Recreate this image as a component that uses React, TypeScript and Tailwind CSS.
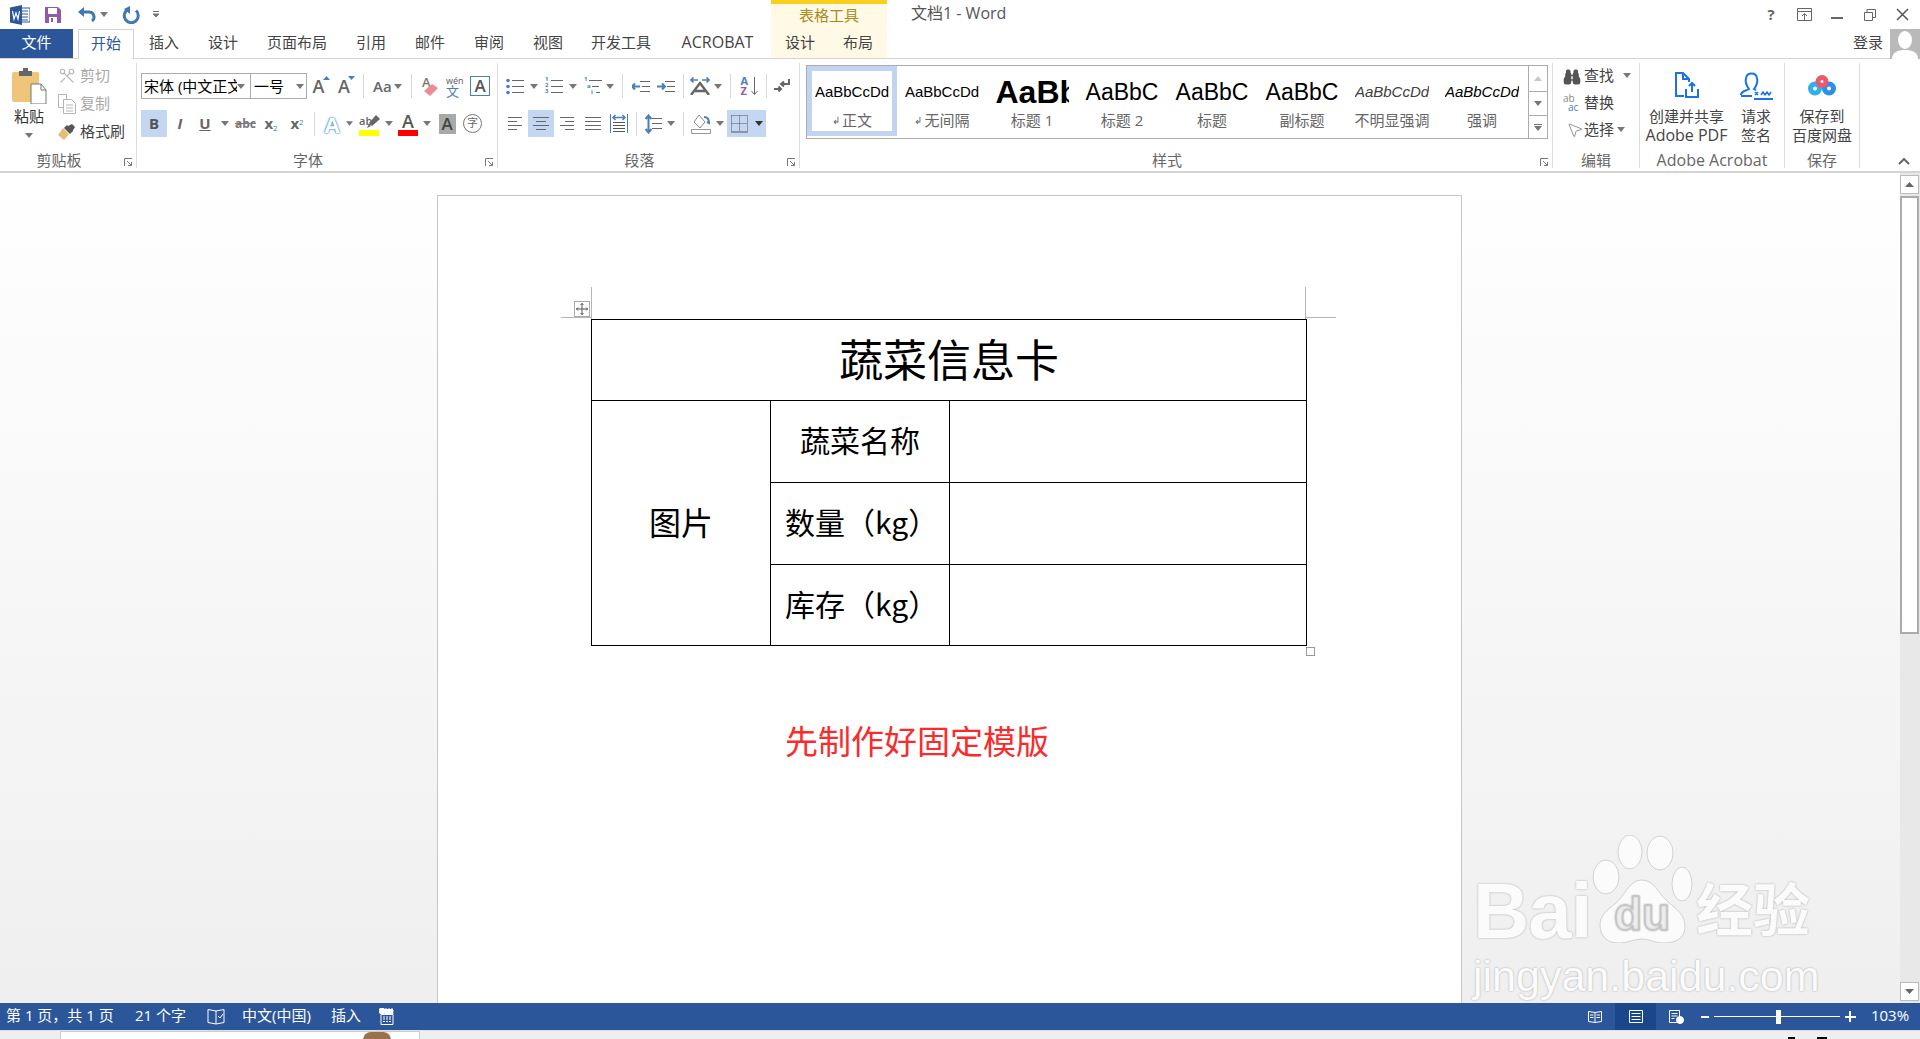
import { Binoculars, MousePointer2, Scissors } from 'lucide-react';

function Caret({ dark }: { dark?: boolean }) {
  return (
    <svg width="8" height="5" viewBox="0 0 8 5" className={dark ? 'fill-[#333]' : 'fill-[#777]'}>
      <path d="M0 0h8L4 5z" />
    </svg>
  );
}

function Sep() {
  return <div className="h-[24px] w-px bg-[#d8d8d8]" />;
}

function Launcher() {
  return (
    <svg width="9" height="9" viewBox="0 0 9 9" className="fill-none stroke-[#777]">
      <path d="M.5 8V.5H8" />
      <path d="M3 3l4 4M4 7.5h3.5V4" />
    </svg>
  );
}

// lines with per-row start and end, used by all paragraph icons
function Lines({ rows, w = 18, h = 16 }: { rows: [number, number, number][]; w?: number; h?: number }) {
  return (
    <svg width={w} height={h} viewBox={`0 0 ${w} ${h}`} className="stroke-[#666]">
      {rows.map(([y, a, b]) => (
        <path key={`${y}-${a}`} d={`M${a} ${y + 0.5}H${b}`} />
      ))}
    </svg>
  );
}

function Bullets() {
  return (
    <svg width="18" height="17" viewBox="0 0 18 17">
      <g className="fill-[#4a7ebb]">
        <circle cx="2" cy="2.5" r="1.8" />
        <circle cx="2" cy="8.5" r="1.8" />
        <circle cx="2" cy="14.5" r="1.8" />
      </g>
      <path d="M6 2.5h12M6 8.5h12M6 14.5h12" className="stroke-[#666]" />
    </svg>
  );
}

function Numbered() {
  return (
    <div className="relative h-[17px] w-[18px]">
      <svg width="18" height="17" viewBox="0 0 18 17">
        <path d="M6 2.5h12M6 8.5h12M6 14.5h12" className="stroke-[#666]" />
      </svg>
      <div className="absolute top-[-2px] left-0 flex flex-col text-[6px] leading-[6px] font-bold text-[#4a7ebb]">
        <span>1</span>
        <span>2</span>
        <span>3</span>
      </div>
    </div>
  );
}

function MultiLevel() {
  return (
    <div className="relative h-[17px] w-[18px]">
      <svg width="18" height="17" viewBox="0 0 18 17">
        <path d="M5 2.5h13M8 8.5h7M12 14.5h4" className="stroke-[#666]" />
      </svg>
      <div className="absolute top-[-2px] left-0 text-[6px] leading-[6px] font-bold text-[#4a7ebb]">1</div>
      <div className="absolute top-[5px] left-[3px] text-[6px] leading-[6px] font-bold text-[#4a7ebb]">a</div>
      <div className="absolute top-[11px] left-[7px] text-[6px] leading-[6px] font-bold text-[#4a7ebb]">i</div>
    </div>
  );
}

function Indent({ flip }: { flip?: boolean }) {
  return (
    <svg width="18" height="11" viewBox="0 0 18 11">
      <path d={flip ? 'M0 5.5h8M5 2.5l3 3-3 3' : 'M8 5.5H0M3 2.5l-3 3 3 3'} className="fill-none stroke-[#4a7ebb] stroke-2" />
      <path d="M8 .5h10M10 5.5h8M8 10.5h10" className="stroke-[#666]" />
    </svg>
  );
}

function TextDir() {
  return (
    <svg width="20" height="18" viewBox="0 0 20 18">
      <path d="M8 3H1M3.500 .5L1 3l2.500 2.500M12 3h7M16.500 .5L19 3l-2.500 2.500" className="fill-none stroke-[#4a7ebb] stroke-[1.6]" />
      <path d="M1 18L10 6l9 12M5 14h10" className="fill-none stroke-[#666] stroke-[2.5]" />
    </svg>
  );
}

function SortIcon() {
  return (
    <div className="flex h-[20px] w-[17px]">
      <div className="flex w-[10px] flex-col text-[11px] leading-[10px] font-bold">
        <span className="text-[#4a7ebb]">A</span>
        <span className="text-[#8f5aa8]">Z</span>
      </div>
      <svg width="7" height="20" viewBox="0 0 7 20" className="fill-none stroke-[#666]">
        <path d="M3.500 1v17M.5 15l3 3.500 3-3.500" />
      </svg>
    </div>
  );
}

function ParaMark() {
  return (
    <svg width="16" height="14" viewBox="0 0 16 14" className="fill-none">
      <path d="M15 0v5H8M10 2.500L7 5l3 2.500" className="stroke-[#666] stroke-2" />
      <path d="M0 10h7M4.500 7.500L7 10l-2.500 2.500" className="stroke-[#666] stroke-2" />
    </svg>
  );
}

function Distribute() {
  return (
    <svg width="18" height="20" viewBox="0 0 18 20" className="fill-none">
      <path d="M.5 0v19M17.500 0v19" className="stroke-[#4a7ebb]" />
      <path d="M3 3.500h12M5.500 1L3 3.500 5.500 6M12.500 1L15 3.500 12.500 6" className="stroke-[#4a7ebb] stroke-[1.500]" />
      <path d="M3 8.500h12M3 11.500h12M3 14.500h12M3 17.500h12" className="stroke-[#555]" />
    </svg>
  );
}

function LineSpace() {
  return (
    <svg width="17" height="20" viewBox="0 0 17 20" className="fill-none">
      <path d="M3.500 2v16M.5 5l3-3.500 3 3.500M.5 15l3 3.500 3-3.500" className="stroke-[#4a7ebb] stroke-2" />
      <path d="M7 4.500h10M7 9.500h10M7 14.500h10" className="stroke-[#666]" />
    </svg>
  );
}

function Shading() {
  return (
    <svg width="20" height="20" viewBox="0 0 20 20" className="fill-none">
      <path d="M8 1l6 7-5 6-6-6z" className="fill-white stroke-[#888]" />
      <path d="M13 3c3 0 5 2 5 6l-2-1" className="stroke-[#4a7ebb] stroke-2" />
      <path d="M.5 15.500h19v4H.5z" className="stroke-[#999]" />
    </svg>
  );
}

function Borders() {
  return (
    <svg width="17" height="18" viewBox="0 0 17 18" className="fill-none stroke-[#555]">
      <path d="M.5 .5h16M.5 .5v16M16.500 .5v16M8.500 .5v16M.5 8.500h16" strokeDasharray="1 1" />
      <path d="M0 17h17" />
    </svg>
  );
}

function WordLogo() {
  return (
    <svg width="20" height="20" viewBox="0 0 20 20">
      <path d="M11 3h9v14h-9z" className="fill-white stroke-[#2b579a]" />
      <path d="M12 6h6M12 9h6M12 12h6M12 15h6" className="stroke-[#2b579a]" />
      <path d="M0 2.500L12 0v20L0 17.500z" className="fill-[#2b579a]" />
      <path d="M2.500 6l1.500 8 2-6 2 6 1.500-8" className="fill-none stroke-white stroke-[1.200]" />
    </svg>
  );
}

function SaveIcon() {
  return (
    <svg width="16" height="16" viewBox="0 0 16 16">
      <path d="M0 0h13l3 3v13H0z" className="fill-[#8f5aa8]" />
      <path d="M3 1h9v6H3z" className="fill-white" />
      <path d="M4 10h8v6H4z" className="fill-white" />
      <path d="M6 11h2v4H6z" className="fill-[#8f5aa8]" />
    </svg>
  );
}

function UndoIcon() {
  return (
    <svg width="18" height="16" viewBox="0 0 18 16" className="fill-none">
      <path d="M2 5h9a5 5 0 0 1 3 9" className="stroke-[#3f78b5] stroke-[3]" />
      <path d="M6 0L0 5l6 5z" className="fill-[#3f78b5]" />
    </svg>
  );
}

function RedoIcon() {
  return (
    <svg width="18" height="18" viewBox="0 0 18 18" className="fill-none">
      <path d="M6 3.500a7 7 0 1 0 8 1" className="stroke-[#3f78b5] stroke-[3]" />
      <path d="M8 0v8L2 3z" className="fill-[#3f78b5]" />
    </svg>
  );
}

function PasteIcon() {
  return (
    <svg width="35" height="36" viewBox="0 0 35 36">
      <rect x="0" y="4" width="27" height="30" rx="2" className="fill-[#eec57a]" />
      <path d="M7 3h4V0h5v3h4v5H7z" className="fill-[#666]" />
      <path d="M19 16h10l5 6v14H19z" className="fill-white stroke-[#777]" />
      <path d="M29 16v6h5" className="fill-none stroke-[#777]" />
    </svg>
  );
}

function CopyIcon() {
  return (
    <svg width="18" height="20" viewBox="0 0 18 20" className="fill-white stroke-[#b5b5b5]">
      <path d="M.5 .5h8v13h-8z" />
      <path d="M5.500 5.500h8l4 4v10h-12z" />
      <path d="M8 11h7M8 14h7M8 17h7" />
    </svg>
  );
}

function BrushIcon() {
  return (
    <svg width="18" height="16" viewBox="0 0 18 16">
      <path d="M5 4l6 6-5 6L0 11z" className="fill-[#e5bd78]" />
      <path d="M10 2l4-2 3 3-3 5z" className="fill-[#555]" />
      <path d="M6 4l3-3 6 6-3 3z" className="fill-[#555]" />
    </svg>
  );
}

function GrowA({ up }: { up?: boolean }) {
  return (
    <div className="relative h-[22px] w-[14px] text-[18px] leading-[22px] font-semibold text-[#666]">
      A
      <svg width="7" height="4" viewBox="0 0 7 4" className="absolute top-[1px] right-[-3px] fill-[#4a7ebb]">
        <path d={up ? 'M0 4h7L3.500 0z' : 'M0 0h7L3.500 4z'} />
      </svg>
    </div>
  );
}

function Eraser() {
  return (
    <svg width="16" height="20" viewBox="0 0 16 20">
      <text x="0" y="11" className="fill-[#777] text-[13px] font-semibold">A</text>
      <path d="M2 15l8-7 6 4-8 8z" className="fill-[#ec8a96]" />
    </svg>
  );
}

function Highlighter() {
  return (
    <div className="relative flex h-[24px] w-[20px] flex-col items-start justify-end">
      <span className="text-[11px] leading-[15px] font-semibold text-[#666]">ab</span>
      <div className="mt-[2px] h-[6px] w-[20px] bg-[#ffff00]" />
      <svg width="13" height="14" viewBox="0 0 13 14" className="absolute top-[3px] right-[-1px] fill-[#666]">
        <path d="M9 0l4 4-8 7-3-3zM2 9l2 2-4 2z" />
      </svg>
    </div>
  );
}

function ExportIcon() {
  return (
    <svg width="24" height="26" viewBox="0 0 24 26" className="fill-none stroke-[#1a73e8] stroke-2">
      <path d="M9 24H1V1h7l6 6v3" />
      <path d="M8 1v6h6" />
      <path d="M11 17v8h12v-8" />
      <path d="M17 20v-9M14 14l3-3 3 3" />
    </svg>
  );
}

function SignIcon() {
  return (
    <svg width="33" height="28" viewBox="0 0 33 28" className="fill-none stroke-[#1a73e8]">
      <path d="M1 23c0-4 5-4 8-6-3-4-4-7-3-11 1-6 10-6 11 0 1 4 0 7-3 11l2 1" className="stroke-2" />
      <path d="M1 24h11" className="stroke-2" />
      <path d="M15 20l3 3M18 20l-3 3M21 23l2-3 2 3 2-3 2 3 2-3" className="stroke-[1.500]" />
      <path d="M14 27h19" className="stroke-2" />
    </svg>
  );
}

function BaiduDisk() {
  return (
    <svg width="28" height="21" viewBox="0 0 28 21" className="fill-none stroke-[5]">
      <circle cx="7" cy="13.500" r="4.500" className="stroke-[#2db0ec]" />
      <circle cx="21" cy="13.500" r="4.500" className="stroke-[#2b8fe6]" />
      <circle cx="14" cy="6.500" r="4" className="stroke-[#ec5a6a]" />
    </svg>
  );
}

function Style({ label, mark, selected, children }: { label: string; mark?: boolean; selected?: boolean; children: React.ReactNode }) {
  return (
    <div className={`flex h-[70px] w-[90px] flex-col items-center border-[5px] ${selected ? 'border-[#c1d5f1]' : 'border-transparent'}`}>
      <div className="flex h-[37px] w-[74px] items-center justify-center overflow-hidden pt-[7px] font-['Liberation_Sans',sans-serif] whitespace-nowrap text-black">
        {children}
      </div>
      <div className="mt-[3px] flex h-[22px] items-center text-[15px] leading-[22px] text-[#666] whitespace-nowrap">
        {mark && <span className="mr-[2px] text-[10px] leading-[10px]">↲</span>}
        {label}
      </div>
    </div>
  );
}

function Group({ label, className, labelClass, launcher, children }: { label: string; className: string; labelClass?: string; launcher?: boolean; children: React.ReactNode }) {
  return (
    <div className={`relative flex h-[105px] shrink-0 flex-col border-r border-[#dcdcdc] ${className}`}>
      <div className="min-h-0 flex-1">{children}</div>
      <div className={`h-[16px] text-center text-[15px] leading-[16px] text-[#666] whitespace-nowrap ${labelClass ?? ''}`}>{label}</div>
      {launcher && (
        <div className="absolute right-[3px] bottom-[1px] flex">
          <Launcher />
        </div>
      )}
    </div>
  );
}

function StatusBar() {
  return (
    <div className="flex h-[27px] shrink-0 items-center bg-[#2b579a] text-[15px] leading-[22px] whitespace-nowrap text-white">
      <span className="w-[135px] pb-[3px] pl-[6px]">第 1 页，共 1 页</span>
      <span className="w-[72px] pb-[3px]">21 个字</span>
      <span className="w-[35px]">
        <svg width="18" height="16" viewBox="0 0 18 16" className="fill-none stroke-white">
          <path d="M9 2L1 .5v13L9 15l8-1.500V.5L9 2zM9 2v13M11 7l2 2 3-4" />
        </svg>
      </span>
      <span className="w-[89px] pb-[3px]">中文(中国)</span>
      <span className="w-[48px] pb-[3px]">插入</span>
      <span>
        <svg width="15" height="17" viewBox="0 0 15 17" className="stroke-white">
          <circle cx="3" cy="3" r="3" className="fill-white" />
          <path d="M2 6.500h12v10H2z" className="fill-none" />
          <path d="M6 1h8v5H6zM4 9h8M4 11h8M4 13.500h8" className="fill-white" strokeDasharray="2 1" />
        </svg>
      </span>
      <div className="ml-auto flex h-full items-center">
        <div className="flex w-[40px] justify-center">
          <svg width="14" height="14" viewBox="0 0 14 14" className="fill-none stroke-white">
            <path d="M.5 1.500L7 2.500l6.500-1v10L7 12.500l-6.500-1zM7 2.500v10M2 5h3.500M2 7.500h3.500M8.500 5H12M8.500 7.500H12" />
          </svg>
        </div>
        <div className="flex h-full w-[41px] items-center justify-center bg-[#19478a]">
          <svg width="14" height="13" viewBox="0 0 14 13" className="fill-none stroke-white">
            <path d="M.5 .5h13v12H.5zM2.500 3.500h9M2.500 6.500h9M2.500 9.500h9" />
          </svg>
        </div>
        <div className="flex w-[40px] justify-center">
          <svg width="15" height="14" viewBox="0 0 15 14" className="fill-none stroke-white">
            <path d="M.5 .5h10v12H.5zM2.500 3.500h6M2.500 6h6M2.500 8.500h3" />
            <circle cx="11" cy="10" r="3.500" className="fill-white" />
          </svg>
        </div>
        <div className="flex w-[18px] justify-center">
          <div className="h-[2px] w-[8px] bg-white" />
        </div>
        <div className="flex w-[126px] items-center">
          <div className="h-px w-[62px] bg-white" />
          <div className="h-[14px] w-[5px] bg-white" />
          <div className="h-px flex-1 bg-white" />
        </div>
        <div className="relative flex h-[12px] w-[20px] items-center justify-center">
          <div className="h-[2px] w-[11px] bg-white" />
          <div className="absolute h-[11px] w-[2px] bg-white" />
        </div>
        <span className="w-[60px] pb-[3px] text-center text-[15px]">103%</span>
      </div>
    </div>
  );
}

function Watermark() {
  return (
    <div className="pointer-events-none absolute top-[662px] left-[1473px] flex w-[350px] flex-col font-['Liberation_Sans','Noto_Sans_CJK_SC',sans-serif] text-[#fbfbfb] [text-shadow:0_0_2px_#a0a0a0]">
      <div className="flex h-[108px] items-end">
        <span className="w-[119px] text-[78px] leading-[64px] font-bold tracking-[-1px] whitespace-nowrap">Bai</span>
        <svg width="102" height="108" viewBox="0 0 102 108" className="shrink-0 fill-[#fbfbfb] stroke-[#d2d2d2]">
          <ellipse cx="14" cy="42" rx="13" ry="17" />
          <ellipse cx="38" cy="17" rx="12" ry="17" />
          <ellipse cx="68" cy="18" rx="13" ry="17" />
          <ellipse cx="90" cy="49" rx="10" ry="17" />
          <path d="M50 45C62 45 66 58 75 66C85 74 93 80 93 92C93 104 82 108 72 108C62 108 58 104 50 104C42 104 36 108 26 108C14 108 8 100 8 90C8 78 18 74 26 66C34 58 38 45 50 45Z" />
          <text x="50" y="95" textAnchor="middle" className="fill-[#efefef] stroke-[#c4c4c4] text-[46px] font-bold">du</text>
        </svg>
        <span className="ml-[2px] text-[57px] leading-[64px] font-bold whitespace-nowrap">经验</span>
      </div>
      <div className="mt-[11px] text-[43px] leading-[44px] whitespace-nowrap">jingyan.baidu.com</div>
    </div>
  );
}

export default function App() {
  return (
    <div className="flex h-[1039px] w-[1920px] flex-col overflow-hidden bg-white font-['Open_Sans','Noto_Sans_CJK_SC',sans-serif] text-[#444]">
      {/* title row */}
      <div className="flex h-[29px] shrink-0 items-center">
        <div className="flex h-full w-[771px] shrink-0 items-center">
          <div className="ml-[10px] flex w-[35px]">
            <WordLogo />
          </div>
          <div className="flex w-[33px]">
            <SaveIcon />
          </div>
          <div className="flex w-[22px]">
            <UndoIcon />
          </div>
          <div className="flex w-[22px]">
            <Caret />
          </div>
          <div className="flex w-[31px]">
            <RedoIcon />
          </div>
          <svg width="6" height="7" viewBox="0 0 6 7" className="fill-none stroke-[#777]">
            <path d="M0 .5h6" />
            <path d="M0 3h6L3 6z" className="fill-[#777]" />
          </svg>
        </div>
        <div className="flex h-full w-[116px] shrink-0 items-center justify-center border-t-4 border-[#f8cf1d] bg-[#fff9e5] pb-[3px] text-[15px] text-[#a88a1d]">
          表格工具
        </div>
        <div className="ml-[24px] pb-[3px] text-[16px] text-[#555]">文档1 - Word</div>
        <div className="ml-auto mr-[5px] flex items-center text-[#666]">
          <span className="w-[26px] text-center text-[15px] font-bold">?</span>
          <div className="flex w-[40px] justify-center">
            <svg width="15" height="13" viewBox="0 0 15 13" className="fill-none stroke-[#666]">
              <path d="M.5 .5h14v12H.5zM.5 3.500h14M7.500 12V6M5 8l2.500-2.500L10 8" />
            </svg>
          </div>
          <div className="flex w-[26px] justify-center">
            <div className="mt-[6px] h-[2px] w-[12px] bg-[#666]" />
          </div>
          <div className="flex w-[40px] justify-center">
            <svg width="12" height="12" viewBox="0 0 12 12" className="fill-none stroke-[#666]">
              <path d="M.5 3.500h8v8h-8zM3 3.500V.5h8.500v8H8.500" />
            </svg>
          </div>
          <div className="flex w-[25px] justify-center">
            <svg width="13" height="13" viewBox="0 0 13 13" className="fill-none stroke-[#555] stroke-[1.500]">
              <path d="M1 1l11 11M12 1L1 12" />
            </svg>
          </div>
        </div>
      </div>

      {/* tabs */}
      <div className="flex h-[30px] shrink-0 border-b border-[#d4d4d4] text-center text-[15px] leading-[27px] whitespace-nowrap">
        <div className="w-[73px] bg-[#2b579a] text-white">文件</div>
        <div className="ml-[5px] -mb-px h-[30px] w-[56px] border-x border-t border-[#d4d4d4] bg-white text-[#2b579a]">开始</div>
        <div className="w-[60px]">插入</div>
        <div className="w-[58px]">设计</div>
        <div className="w-[90px]">页面布局</div>
        <div className="w-[58px]">引用</div>
        <div className="w-[60px]">邮件</div>
        <div className="w-[58px]">审阅</div>
        <div className="w-[60px]">视图</div>
        <div className="w-[86px]">开发工具</div>
        <div className="w-[107px] text-[16px]">ACROBAT</div>
        <div className="flex w-[116px] bg-[#fff9e5]">
          <div className="w-[58px]">设计</div>
          <div className="w-[58px]">布局</div>
        </div>
        <div className="ml-auto flex">
          <span className="mr-[7px]">登录</span>
          <div className="-mb-px flex h-[30px] w-[30px] items-start justify-center overflow-hidden bg-[#b9b9b9]">
            <svg width="30" height="30" viewBox="0 0 30 30" className="fill-white">
              <ellipse cx="15" cy="11" rx="7" ry="9" />
              <path d="M2 30c0-7 6-9 13-9s13 2 13 9z" />
            </svg>
          </div>
        </div>
      </div>

      {/* ribbon */}
      <div className="relative flex h-[114px] shrink-0 border-b-2 border-[#d4d4d4] pt-[4px] text-[15px] whitespace-nowrap">
        <Group label="剪贴板" className="w-[137px]" labelClass="pr-[18px]" launcher>
          <div className="flex">
            <div className="flex w-[58px] flex-col items-center pt-[5px]">
              <PasteIcon />
              <span className="mt-[1px] text-[15px] leading-[22px] text-[#333]">粘贴</span>
              <div className="mt-[6px] flex">
                <Caret />
              </div>
            </div>
            <div className="-mt-[2px] flex flex-col">
              <div className="flex h-[28px] items-center text-[#a8a8a8]">
                <div className="flex w-[22px] justify-start pt-[2px]">
                  <Scissors className="h-[18px] w-[18px] rotate-90 text-[#b5b5b5]" strokeWidth={1.5} />
                </div>
                剪切
              </div>
              <div className="flex h-[28px] items-center text-[#a8a8a8]">
                <div className="flex w-[22px] justify-start pt-[2px]">
                  <CopyIcon />
                </div>
                复制
              </div>
              <div className="flex h-[28px] items-center text-[#444]">
                <div className="flex w-[22px] justify-start pt-[2px]">
                  <BrushIcon />
                </div>
                格式刷
              </div>
            </div>
          </div>
        </Group>

        <Group label="字体" className="w-[361px] pl-[4px]" labelClass="pr-[22px]" launcher>
          <div className="mt-[10px] flex h-[26px] items-center">
            <div className="flex h-[26px] w-[110px] items-center border border-[#ababab] pl-[2px] leading-[22px] text-black">
              <span className="w-[93px] overflow-hidden whitespace-nowrap">宋体 (中文正文</span>
              <Caret />
            </div>
            <div className="flex h-[26px] w-[56px] items-center border border-l-0 border-[#ababab] pl-[3px] leading-[22px] text-black">
              <span className="w-[42px]">一号</span>
              <Caret />
            </div>
            <div className="flex w-[25px] justify-center">
              <GrowA up />
            </div>
            <div className="flex w-[26px] justify-center">
              <GrowA />
            </div>
            <div className="flex w-[10px] justify-center">
              <Sep />
            </div>
            <span className="ml-[5px] w-[21px] text-[15px] leading-[20px] font-semibold text-[#666]">Aa</span>
            <Caret />
            <div className="flex w-[18px] justify-center">
              <Sep />
            </div>
            <div className="flex w-[24px] justify-start pl-[2px]">
              <Eraser />
            </div>
            <div className="flex w-[26px] flex-col items-start pl-[2px] text-[9px] leading-[9px] text-[#555]">
              wén
              <span className="text-[13px] leading-[12px] text-[#4a7ebb]">文</span>
            </div>
            <div className="flex h-[20px] w-[20px] items-center justify-center border border-[#4a7ebb] text-[17px] leading-[18px] font-semibold text-[#555]">A</div>
          </div>
          <div className="mt-[11px] flex h-[27px] items-center">
            <div className="flex h-[27px] w-[26px] items-center justify-center bg-[#c3d6f2] text-[15px] font-bold text-[#555]">B</div>
            <div className="w-[26px] text-center text-[15px] font-bold text-[#666] italic">I</div>
            <div className="w-[24px] text-center text-[15px] font-bold text-[#666] underline">U</div>
            <div className="flex w-[16px] justify-center">
              <Caret />
            </div>
            <div className="w-[25px] text-center text-[12px] font-bold text-[#777] line-through">abc</div>
            <div className="w-[26px] text-center text-[15px] font-bold text-[#666]">
              x<sub className="text-[8px] font-normal text-[#4a7ebb]">2</sub>
            </div>
            <div className="w-[26px] text-center text-[15px] font-bold text-[#666]">
              x<sup className="text-[8px] font-normal text-[#4a7ebb]">2</sup>
            </div>
            <div className="flex w-[8px] justify-center">
              <Sep />
            </div>
            <div className="w-[28px] text-center text-[22px] leading-[26px] font-bold text-white [text-shadow:0_0_2px_#2f7fd8,0_0_2px_#2f7fd8]">A</div>
            <div className="flex w-[7px] justify-center">
              <Caret />
            </div>
            <div className="flex w-[32px] justify-center">
              <Highlighter />
            </div>
            <div className="flex w-[8px] justify-center">
              <Caret />
            </div>
            <div className="flex w-[30px] justify-center">
              <div className="flex h-[24px] w-[20px] flex-col items-center justify-end">
                <span className="text-[18px] leading-[18px] font-semibold text-[#555]">A</span>
                <div className="h-[6px] w-[20px] bg-[#ff0000]" />
              </div>
            </div>
            <div className="flex w-[8px] justify-center">
              <Caret />
            </div>
            <div className="flex w-[32px] justify-center">
              <div className="flex h-[20px] w-[17px] items-center justify-center bg-[#a9a9a9] text-[17px] font-semibold text-[#444]">A</div>
            </div>
            <div className="flex h-[19px] w-[19px] items-center justify-center rounded-full border border-[#777] text-[11px] text-[#666]">字</div>
          </div>
        </Group>

        <Group label="段落" className="w-[302px] pl-[8px]" labelClass="pr-[26px]" launcher>
          <div className="mt-[10px] flex h-[26px] items-center">
            <Bullets />
            <div className="flex w-[20px] justify-center">
              <Caret />
            </div>
            <div className="flex w-[20px] justify-center">
              <Numbered />
            </div>
            <div className="flex w-[18px] justify-center">
              <Caret />
            </div>
            <div className="flex w-[22px] justify-center">
              <MultiLevel />
            </div>
            <div className="flex w-[12px] justify-center">
              <Caret />
            </div>
            <div className="flex w-[12px] justify-center">
              <Sep />
            </div>
            <div className="flex w-[25px] justify-center">
              <Indent />
            </div>
            <div className="flex w-[26px] justify-center">
              <Indent flip />
            </div>
            <div className="flex w-[8px] justify-center">
              <Sep />
            </div>
            <div className="flex w-[26px] justify-center">
              <TextDir />
            </div>
            <div className="flex w-[10px] justify-center">
              <Caret />
            </div>
            <div className="flex w-[14px] justify-center">
              <Sep />
            </div>
            <div className="flex w-[24px] justify-center">
              <SortIcon />
            </div>
            <div className="flex w-[10px] justify-center">
              <Sep />
            </div>
            <div className="flex w-[22px] justify-center">
              <ParaMark />
            </div>
          </div>
          <div className="mt-[11px] flex h-[27px] items-center">
            <div className="flex w-[22px] pl-[2px]">
              <Lines w={14} h={14} rows={[[0, 0, 14], [4, 0, 9], [8, 0, 14], [12, 0, 9]]} />
            </div>
            <div className="flex h-[27px] w-[26px] items-center justify-center bg-[#c3d6f2]">
              <Lines w={16} h={14} rows={[[0, 0, 16], [4, 3, 13], [8, 0, 16], [12, 3, 13]]} />
            </div>
            <div className="flex w-[26px] justify-center">
              <Lines w={14} h={14} rows={[[0, 0, 14], [4, 5, 14], [8, 0, 14], [12, 5, 14]]} />
            </div>
            <div className="flex w-[26px] justify-center">
              <Lines w={16} h={14} rows={[[0, 0, 16], [4, 0, 16], [8, 0, 16], [12, 0, 16]]} />
            </div>
            <div className="flex w-[26px] justify-center">
              <Distribute />
            </div>
            <div className="flex w-[8px] justify-center">
              <Sep />
            </div>
            <div className="flex w-[26px] justify-center">
              <LineSpace />
            </div>
            <div className="flex w-[10px] justify-center">
              <Caret />
            </div>
            <div className="flex w-[14px] justify-center">
              <Sep />
            </div>
            <div className="flex w-[22px] justify-center">
              <Shading />
            </div>
            <div className="flex w-[15px] justify-center">
              <Caret />
            </div>
            <div className="flex h-[27px] w-[39px] items-center gap-[7px] bg-[#c3d6f2] pl-[4px]">
              <Borders />
              <Caret dark />
            </div>
          </div>
        </Group>

        <Group label="样式" className="w-[753px] pl-[6px]" labelClass="pr-[24px]" launcher>
          <div className="mt-[2px] flex h-[74px] w-[742px] border border-[#ababab] bg-white">
            <Style label="正文" mark selected>
              <span className="text-[15px]">AaBbCcDd</span>
            </Style>
            <Style label="无间隔" mark>
              <span className="text-[15px]">AaBbCcDd</span>
            </Style>
            <Style label="标题 1">
              <span className="w-[73px] overflow-hidden text-[32px] font-bold">AaBb</span>
            </Style>
            <Style label="标题 2">
              <span className="text-[23px]">AaBbC</span>
            </Style>
            <Style label="标题">
              <span className="text-[23px]">AaBbC</span>
            </Style>
            <Style label="副标题">
              <span className="text-[23px]">AaBbC</span>
            </Style>
            <Style label="不明显强调">
              <span className="text-[15px] text-[#404040] italic">AaBbCcDd</span>
            </Style>
            <Style label="强调">
              <span className="text-[15px] italic">AaBbCcDd</span>
            </Style>
            <div className="ml-[1px] flex w-[19px] flex-col border-l border-[#ababab]">
              <div className="flex h-[26px] items-center justify-center border-b border-[#ababab]">
                <svg width="8" height="5" viewBox="0 0 8 5" className="fill-[#c8c8c8]">
                  <path d="M0 5h8L4 0z" />
                </svg>
              </div>
              <div className="flex h-[24px] items-center justify-center border-b border-[#ababab]">
                <Caret />
              </div>
              <div className="flex flex-1 flex-col items-center justify-center gap-[1px]">
                <div className="h-px w-[8px] bg-[#777]" />
                <Caret />
              </div>
            </div>
          </div>
        </Group>

        <Group label="编辑" className="w-[87px] pl-[10px]" labelClass="pr-[10px]">
          <div className="-mt-[1px] flex h-[27px] items-center">
            <div className="flex w-[21px] pt-[2px]">
              <Binoculars className="h-[18px] w-[18px] fill-[#555] text-[#555]" />
            </div>
            查找
            <div className="ml-[9px] flex">
              <Caret />
            </div>
          </div>
          <div className="flex h-[27px] items-center">
            <div className="flex w-[21px] flex-col text-[10px] leading-[9px]">
              <span className="text-[#888]">ab</span>
              <span className="pl-[5px] text-[#4a7ebb]">ac</span>
            </div>
            替换
          </div>
          <div className="flex h-[27px] items-center">
            <div className="flex w-[21px] pl-[3px]">
              <MousePointer2 className="h-[18px] w-[18px] text-[#888]" strokeWidth={1.2} />
            </div>
            选择
            <div className="ml-[3px] flex">
              <Caret />
            </div>
          </div>
        </Group>

        <Group label="Adobe Acrobat" className="w-[145px]" labelClass="text-[16px]">
          <div className="flex pt-[9px]">
            <div className="flex w-[93px] flex-col items-center">
              <div className="flex h-[30px] items-start">
                <ExportIcon />
              </div>
              <div className="mt-[5px] text-center text-[15px] leading-[19px]">
                创建并共享
                <br />
                <span className="text-[16px]">Adobe PDF</span>
              </div>
            </div>
            <div className="flex w-[46px] flex-col items-center">
              <div className="flex h-[30px] items-start">
                <SignIcon />
              </div>
              <div className="mt-[5px] text-center text-[15px] leading-[19px]">
                请求
                <br />
                签名
              </div>
            </div>
          </div>
        </Group>

        <Group label="保存" className="w-[75px]">
          <div className="flex flex-col items-center pt-[12px]">
            <div className="flex h-[27px] items-start">
              <BaiduDisk />
            </div>
            <div className="mt-[5px] text-center text-[15px] leading-[19px]">
              保存到
              <br />
              百度网盘
            </div>
          </div>
        </Group>

        <div className="flex h-[105px] flex-1 items-end justify-end pr-[10px] pb-[3px]">
          <svg width="12" height="7" viewBox="0 0 12 7" className="fill-none stroke-[#666] stroke-2">
            <path d="M1 6l5-5 5 5" />
          </svg>
        </div>
      </div>

      {/* document */}
      <div className="flex h-[830px] shrink-0 overflow-hidden">
        <div className="relative flex-1 overflow-hidden bg-gradient-to-b from-white to-[#efefef]">
          <div className="mt-[22px] ml-[437px] h-[900px] w-[1025px] border border-[#c6c6c6] bg-white font-['Noto_Sans_CJK_SC',sans-serif] text-black">
            <div className="relative mt-[123px] ml-[153px] w-[715px]">
              <table className="w-[715px] table-fixed border-collapse text-[30px]">
                <colgroup>
                  <col className="w-[179px]" />
                  <col className="w-[179px]" />
                  <col className="w-[357px]" />
                </colgroup>
                <tbody>
                  <tr className="h-[81px]">
                    <td colSpan={3} className="border border-black pb-[5px] text-center text-[44px]">
                      蔬菜信息卡
                    </td>
                  </tr>
                  <tr className="h-[82px]">
                    <td rowSpan={3} className="border border-black pb-[4px] text-center text-[32px]">
                      图片
                    </td>
                    <td className="border border-black pb-[4px] text-center">蔬菜名称</td>
                    <td className="border border-black" />
                  </tr>
                  <tr className="h-[82px]">
                    <td className="border border-black pb-[4px] pl-[14px] whitespace-nowrap">数量（kg）</td>
                    <td className="border border-black" />
                  </tr>
                  <tr className="h-[81px]">
                    <td className="border border-black pb-[4px] pl-[14px] whitespace-nowrap">库存（kg）</td>
                    <td className="border border-black" />
                  </tr>
                </tbody>
              </table>
              <div className="absolute top-[-32px] left-0 h-[32px] w-px bg-[#b5b5b5]" />
              <div className="absolute top-[-2px] left-[-30px] h-px w-[30px] bg-[#b5b5b5]" />
              <div className="absolute top-[-32px] right-0 h-[32px] w-px bg-[#b5b5b5]" />
              <div className="absolute top-[-2px] right-[-30px] h-px w-[30px] bg-[#b5b5b5]" />
              <div className="absolute top-[-18px] left-[-17px] flex h-[16px] w-[16px] items-center justify-center border border-[#aaa] bg-white">
                <svg width="12" height="12" viewBox="0 0 12 12" className="fill-none stroke-[#555]">
                  <path d="M6 0v12M0 6h12M4.500 2L6 .5 7.500 2M4.500 10L6 11.500 7.500 10M2 4.500L.5 6 2 7.500M10 4.500L11.500 6 10 7.500" />
                </svg>
              </div>
              <div className="absolute right-[-9px] bottom-[-10px] h-[9px] w-[9px] border border-[#999] bg-white" />
            </div>
            <div className="mt-[74px] ml-[347px] text-[33px] leading-[40px] text-[#f92b2b]">先制作好固定模版</div>
          </div>
          <Watermark />
        </div>
        <div className="flex w-[20px] shrink-0 flex-col bg-[#e8e8e8] pt-[2px]">
          <div className="flex h-[19px] w-[19px] items-center justify-center border border-[#bbb] bg-white">
            <svg width="9" height="5" viewBox="0 0 9 5" className="fill-[#666]">
              <path d="M0 5h9L4.500 0z" />
            </svg>
          </div>
          <div className="mt-[2px] h-[438px] w-[19px] border-2 border-[#ababab] bg-white" />
          <div className="mt-auto mb-[2px] flex h-[19px] w-[19px] items-center justify-center border border-[#bbb] bg-white">
            <svg width="9" height="5" viewBox="0 0 9 5" className="fill-[#666]">
              <path d="M0 0h9L4.500 5z" />
            </svg>
          </div>
        </div>
      </div>

      <StatusBar />

      {/* sliver of whatever sits below the window */}
      <div className="flex h-[9px] shrink-0 border-t border-[#e0e0e0] bg-[#efefef]">
        <div className="ml-[60px] flex h-[9px] w-[360px] justify-end border border-[#ccc] bg-white pr-[28px]">
          <div className="h-[8px] w-[28px] rounded-t-full bg-[#9c7048]" />
        </div>
        <div className="mt-[6px] ml-[1368px] flex h-[2px] gap-[2px]">
          <div className="w-[7px] bg-black" />
          <div className="ml-[20px] w-[10px] bg-black" />
        </div>
      </div>
    </div>
  );
}
